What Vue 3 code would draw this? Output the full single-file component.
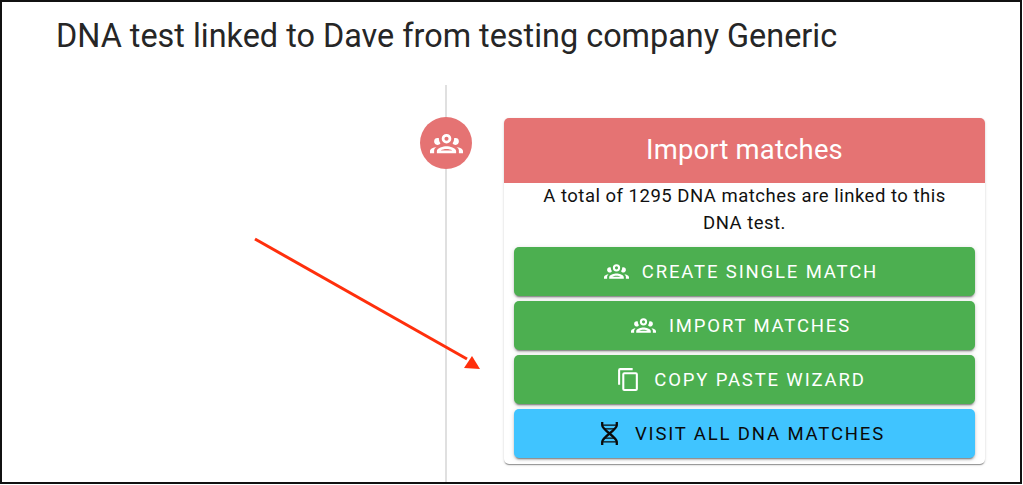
<script setup>
const groupIcon = 'M12,5A3.5,3.5 0 0,0 8.5,8.5A3.5,3.5 0 0,0 12,12A3.5,3.5 0 0,0 15.5,8.5A3.5,3.5 0 0,0 12,5M12,7A1.5,1.5 0 0,1 13.5,8.5A1.5,1.5 0 0,1 12,10A1.5,1.5 0 0,1 10.5,8.5A1.5,1.5 0 0,1 12,7M5.5,8A2.5,2.5 0 0,0 3,10.5C3,11.44 3.53,12.25 4.29,12.68C4.65,12.88 5.06,13 5.5,13C5.94,13 6.35,12.88 6.71,12.68C7.08,12.47 7.39,12.17 7.62,11.81C6.89,10.86 6.5,9.7 6.5,8.5C6.5,8.41 6.5,8.31 6.5,8.22C6.2,8.08 5.86,8 5.5,8M18.5,8C18.14,8 17.8,8.08 17.5,8.22C17.5,8.31 17.5,8.41 17.5,8.5C17.5,9.7 17.11,10.86 16.38,11.81C16.5,12 16.63,12.15 16.78,12.3C16.94,12.45 17.1,12.58 17.29,12.68C17.65,12.88 18.06,13 18.5,13C18.94,13 19.35,12.88 19.71,12.68C20.47,12.25 21,11.44 21,10.5A2.5,2.5 0 0,0 18.5,8M12,14C9.66,14 5,15.17 5,17.5V19H19V17.5C19,15.17 14.34,14 12,14M4.71,14.55C2.78,14.78 0,15.76 0,17.5V19H3V17.07C3,16.06 3.69,15.22 4.71,14.55M19.29,14.55C20.31,15.22 21,16.06 21,17.07V19H24V17.5C24,15.76 21.22,14.78 19.29,14.55M12,16C13.53,16 15.24,16.5 16.23,17H7.77C8.76,16.5 10.47,16 12,16Z'
const copyIcon = 'M19,21H8V7H19M19,5H8A2,2 0 0,0 6,7V21A2,2 0 0,0 8,23H19A2,2 0 0,0 21,21V7A2,2 0 0,0 19,5M16,1H4A2,2 0 0,0 2,3V17H4V3H16V1Z'

const buttons = [
  { label: 'Create single match', icon: 'group', kind: 'green' },
  { label: 'Import matches', icon: 'group', kind: 'green' },
  { label: 'Copy paste wizard', icon: 'copy', kind: 'green' },
  { label: 'Visit all DNA matches', icon: 'dna', kind: 'blue' },
]
</script>

<template>
  <div class="frame">
    <h1 class="title">DNA test linked to Dave from testing company Generic</h1>

    <div class="timeline">
      <div class="marker">
        <svg class="marker-icon" viewBox="0 0 24 24"><path :d="groupIcon" /></svg>
      </div>

      <div class="card">
        <div class="card-head">Import matches</div>
        <p class="card-text">A total of 1295 DNA matches are linked to this DNA test.</p>
        <div class="actions">
          <button v-for="b in buttons" :key="b.label" class="btn" :class="b.kind">
            <svg v-if="b.icon === 'group'" class="icon" viewBox="0 0 24 24"><path :d="groupIcon" /></svg>
            <svg v-else-if="b.icon === 'copy'" class="icon" viewBox="0 0 24 24"><path :d="copyIcon" /></svg>
            <svg v-else class="icon" viewBox="0 0 24 24">
              <g fill="none" stroke="currentColor" stroke-width="2.200">
                <path d="M5 1V4C5 8.500 19 15.500 19 20V23" />
                <path d="M19 1V4C19 8.500 5 15.500 5 20V23" />
              </g>
              <g fill="none" stroke="currentColor" stroke-width="1.300">
                <path d="M5 4H19M7 7.500H17M7 16.500H17M5 20H19" />
              </g>
            </svg>
            <span>{{ b.label }}</span>
          </button>
        </div>
      </div>
    </div>

    <svg class="arrow" viewBox="0 0 240 140">
      <path d="M10 9L222 129" stroke="#ff2f0c" stroke-width="3" fill="none" />
      <path d="M235 139L219 138L227 126Z" fill="#ff2f0c" />
    </svg>
  </div>
</template>

<style scoped>
.frame {
  position: relative;
  box-sizing: border-box;
  width: 1022px;
  height: 484px;
  border: 2px solid #111;
  background: #fff;
  font-family: Roboto, "Liberation Sans", sans-serif;
  overflow: hidden;
}

.title {
  margin: 0;
  padding: 15px 0 0 54px;
  height: 83px;
  box-sizing: border-box;
  font-size: 32.400px;
  line-height: 38px;
  font-weight: 400;
  color: #262626;
}

.timeline {
  display: flex;
  align-items: flex-start;
  height: 397px;
  margin-left: 418px;
  padding-top: 33px;
  box-sizing: border-box;
  background: linear-gradient(#e0e0e0, #e0e0e0) 25px 0 / 2px 100% no-repeat;
}

.marker {
  flex: none;
  display: flex;
  align-items: center;
  justify-content: center;
  width: 52px;
  height: 52px;
  margin-top: -1px;
  border-radius: 50%;
  background: #e57373;
}

.marker-icon {
  width: 33px;
  height: 33px;
  fill: #fff;
}

.card {
  width: 481px;
  margin-left: 32px;
  border-radius: 5px;
  background: #fff;
  box-shadow: 0 2px 1px -1px rgba(0, 0, 0, 0.25), 0 1px 1px 0 rgba(0, 0, 0, 0.16), 0 1px 3px 0 rgba(0, 0, 0, 0.14);
}

.card-head {
  height: 65px;
  border-radius: 5px 5px 0 0;
  background: #e57373;
  color: #fff;
  font-size: 27.400px;
  line-height: 65px;
  text-align: center;
  letter-spacing: 0.2px;
}

.card-text {
  margin: 0;
  padding: 0 36px;
  font-size: 18.500px;
  line-height: 27px;
  text-align: center;
  color: #111;
  letter-spacing: 0.5px;
}

.actions {
  display: flex;
  flex-direction: column;
  gap: 5px;
  padding: 10px 10px 6px;
}

.btn {
  display: flex;
  align-items: center;
  justify-content: center;
  gap: 13px;
  height: 49px;
  padding: 0 7px 0 0;
  border: 0;
  border-radius: 5px;
  font-family: inherit;
  font-size: 18.500px;
  font-weight: 400;
  letter-spacing: 1.850px;
  text-transform: uppercase;
  box-shadow: 0 3px 1px -2px rgba(0, 0, 0, 0.28), 0 2px 2px 0 rgba(0, 0, 0, 0.18), 0 1px 5px 0 rgba(0, 0, 0, 0.14);
}

.btn.green {
  background: #4caf50;
  color: #fff;
}

.btn.blue {
  background: #40c4ff;
  color: #0a0a0a;
}

.icon {
  width: 25px;
  height: 25px;
  fill: currentColor;
}

.arrow {
  position: absolute;
  left: 243px;
  top: 228px;
  width: 240px;
  height: 140px;
}
</style>
